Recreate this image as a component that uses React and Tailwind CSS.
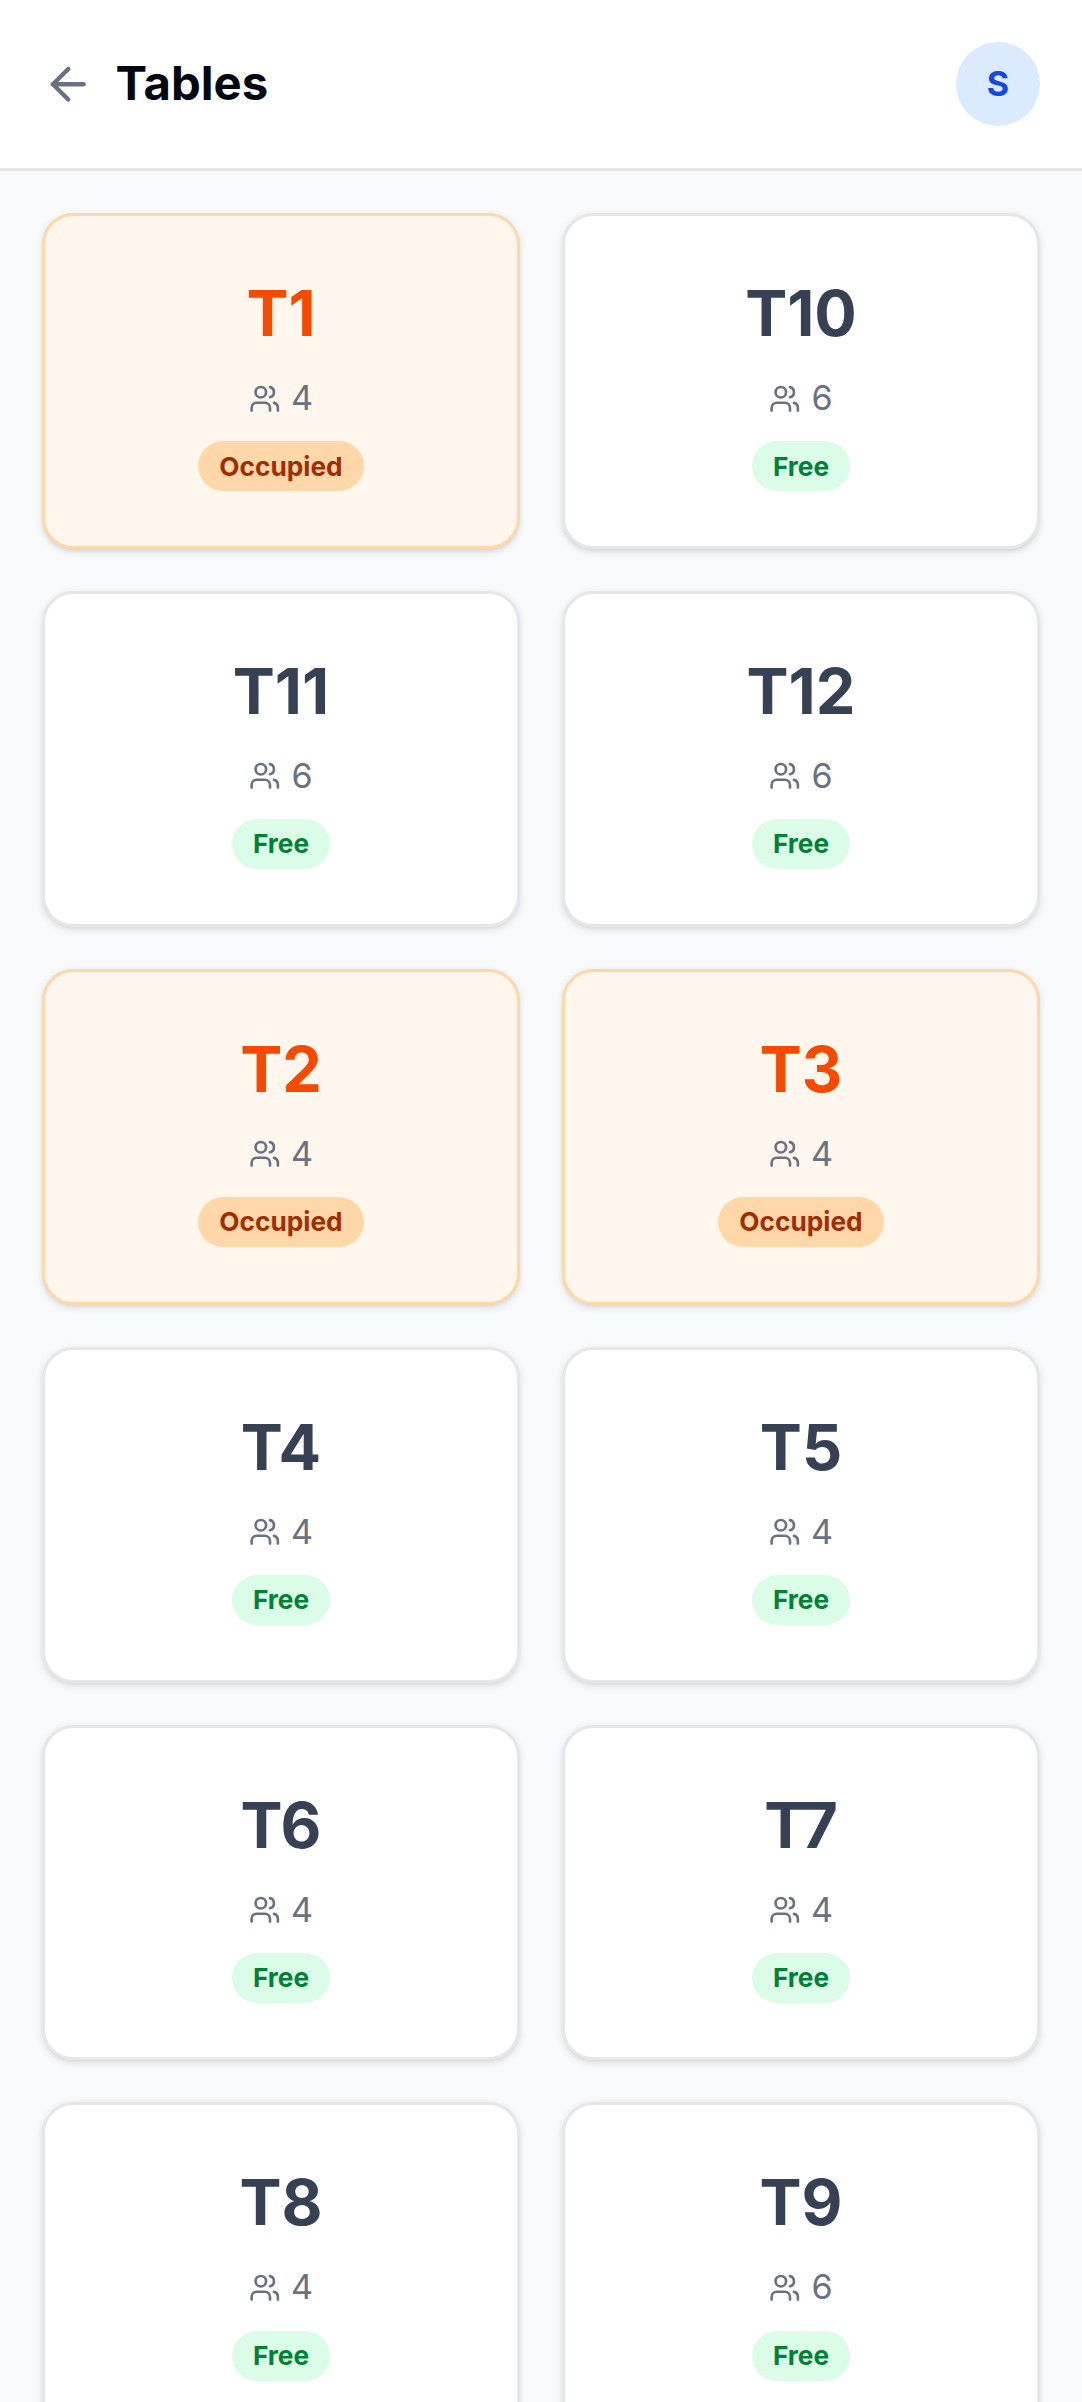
import React from "react";
import { ArrowLeft, Users } from "lucide-react";

const tables = [
  { name: "T1", seats: 4, occupied: true },
  { name: "T10", seats: 6 },
  { name: "T11", seats: 6 },
  { name: "T12", seats: 6 },
  { name: "T2", seats: 4, occupied: true },
  { name: "T3", seats: 4, occupied: true },
  { name: "T4", seats: 4 },
  { name: "T5", seats: 4 },
  { name: "T6", seats: 4 },
  { name: "T7", seats: 4 },
  { name: "T8", seats: 4 },
  { name: "T9", seats: 6 },
];

const TableCard = ({ table }) => {
  const { name, seats, occupied } = table;
  return (
    <div
      className={`flex flex-col items-center rounded-[31.5px] border-[3px] px-[52.5px] pt-[55px] pb-[54.75px] shadow-[0_2.6px_8px_0_rgba(0,0,0,0.1),0_2.6px_5px_-2.6px_rgba(0,0,0,0.1)] ${
        occupied ? "bg-orange-50 border-orange-200" : "bg-white border-gray-200"
      }`}
    >
      <div
        className={`text-[63px] leading-[84px] font-bold ${
          occupied ? "text-orange-600" : "text-gray-700"
        }`}
      >
        {name}
      </div>
      <div className="mt-[17px] flex items-center gap-[10.5px] text-[34.125px] leading-[52.5px] text-gray-500">
        <Users className="w-[31.5px] h-[31.5px]" />
        <span>{seats}</span>
      </div>
      <span
        className={`mt-[16.75px] rounded-full px-[21px] py-[5.25px] text-[26.25px] leading-[39.375px] font-bold ${
          occupied ? "bg-orange-200 text-orange-800" : "bg-green-100 text-green-700"
        }`}
      >
        {occupied ? "Occupied" : "Free"}
      </span>
    </div>
  );
};

export default function App() {
  return (
    <div className="h-screen overflow-hidden bg-gray-50 font-['Inter',sans-serif]">
      {/* Header */}
      <header className="flex items-center justify-between bg-white border-b-[3px] border-gray-200 p-[42px]">
        <div className="flex items-center gap-[21px]">
          <ArrowLeft className="w-[52.5px] h-[52.5px] text-gray-500" />
          <h1 className="pb-[3px] text-[47.25px] leading-[73.5px] font-bold text-gray-950">Tables</h1>
        </div>
        <div className="w-[84px] h-[84px] rounded-full bg-blue-100 text-blue-700 flex items-center justify-center text-[34.125px] font-bold">
          S
        </div>
      </header>

      {/* Table grid */}
      <main className="grid grid-cols-2 gap-[42px] p-[42px]">
        {tables.map((table) => (
          <TableCard key={table.name} table={table} />
        ))}
      </main>
    </div>
  );
}
